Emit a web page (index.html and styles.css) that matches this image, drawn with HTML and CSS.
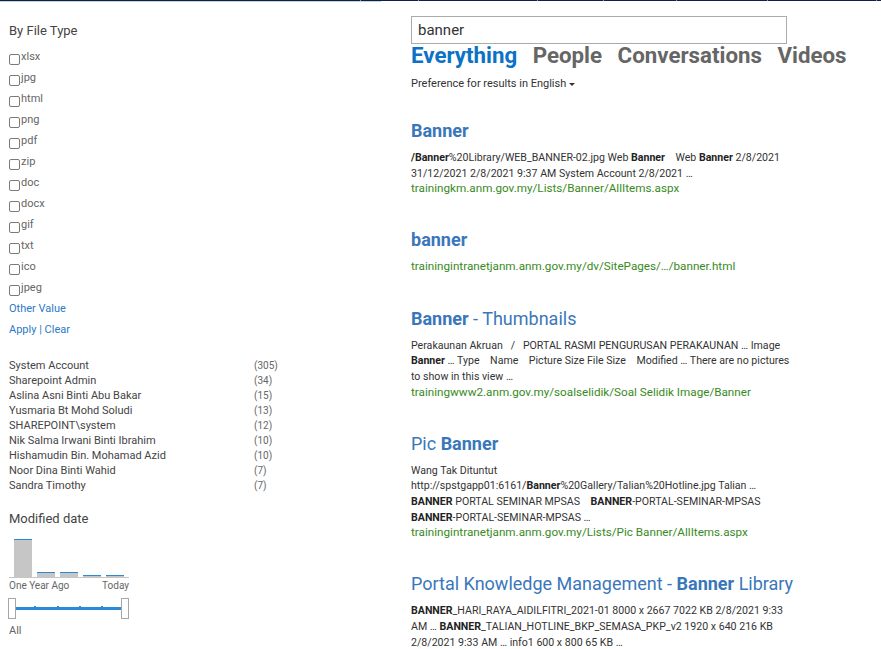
FILE: index.html
```html
<!DOCTYPE html>
<html>
<head>
<meta charset="utf-8">
<link rel="stylesheet" href="styles.css">
</head>
<body>
<div class="topline">
  <div class="navy">
    <span style="width:360px"></span><span style="width:57px"></span><span style="width:118px"></span><span style="width:65px"></span><span style="width:72px"></span><span style="width:90px"></span><span style="width:108px"></span><span class="last"></span>
  </div>
  <div class="lav"></div>
</div>
<div class="page">
  <aside class="refiners">
    <h3 class="ref-title">By File Type</h3>
    <ul class="types">
      <li><span class="cb"></span>xlsx</li>
      <li><span class="cb"></span>jpg</li>
      <li><span class="cb"></span>html</li>
      <li><span class="cb"></span>png</li>
      <li><span class="cb"></span>pdf</li>
      <li><span class="cb"></span>zip</li>
      <li><span class="cb"></span>doc</li>
      <li><span class="cb"></span>docx</li>
      <li><span class="cb"></span>gif</li>
      <li><span class="cb"></span>txt</li>
      <li><span class="cb"></span>ico</li>
      <li><span class="cb"></span>jpeg</li>
    </ul>
    <div class="link-row"><a>Other Value</a></div>
    <div class="link-row"><a>Apply</a> | <a>Clear</a></div>

    <ul class="authors">
      <li><span class="name">System Account</span><span class="count">(305)</span></li>
      <li><span class="name">Sharepoint Admin</span><span class="count">(34)</span></li>
      <li><span class="name">Aslina Asni Binti Abu Bakar</span><span class="count">(15)</span></li>
      <li><span class="name">Yusmaria Bt Mohd Soludi</span><span class="count">(13)</span></li>
      <li><span class="name">SHAREPOINT\system</span><span class="count">(12)</span></li>
      <li><span class="name">Nik Salma Irwani Binti Ibrahim</span><span class="count">(10)</span></li>
      <li><span class="name">Hishamudin Bin. Mohamad Azid</span><span class="count">(10)</span></li>
      <li><span class="name">Noor Dina Binti Wahid</span><span class="count">(7)</span></li>
      <li><span class="name">Sandra Timothy</span><span class="count">(7)</span></li>
    </ul>

    <h3 class="ref-title date-title">Modified date</h3>
    <div class="histo">
      <div class="bar" style="height:38px"></div>
      <div class="bar" style="height:5px"></div>
      <div class="bar" style="height:5px"></div>
      <div class="bar" style="height:2px"></div>
      <div class="bar" style="height:2px"></div>
    </div>
    <div class="histo-labels"><span>One Year Ago</span><span>Today</span></div>
    <div class="slider">
      <span class="handle"></span>
      <div class="track">
        <i style="left:18px"></i><i style="left:41px"></i><i style="left:63px"></i><i style="left:85px"></i>
      </div>
      <span class="handle"></span>
    </div>
    <div class="all">All</div>
  </aside>

  <main class="results">
    <div class="searchbox">banner</div>
    <nav class="tabs">
      <a class="active">Everything</a><a>People</a><a>Conversations</a><a>Videos</a>
    </nav>
    <div class="pref">Preference for results in English <span class="caret"></span></div>

    <div class="result">
      <h2 class="rtitle"><b>Banner</b></h2>
      <p class="snip"><b>/Banner</b>%20Library/WEB_BANNER-02.jpg Web <b>Banner</b> &nbsp;&nbsp; Web <b>Banner</b> 2/8/2021 31/12/2021 2/8/2021 9:37 AM System Account 2/8/2021 …</p>
      <div class="url">trainingkm.anm.gov.my/Lists/Banner/AllItems.aspx</div>
    </div>

    <div class="result">
      <h2 class="rtitle"><b>banner</b></h2>
      <div class="url">trainingintranetjanm.anm.gov.my/dv/SitePages/…/banner.html</div>
    </div>

    <div class="result">
      <h2 class="rtitle"><b>Banner</b> - Thumbnails</h2>
      <p class="snip">Perakaunan Akruan &nbsp; / &nbsp; PORTAL RASMI PENGURUSAN PERAKAUNAN … Image <b>Banner</b> … Type &nbsp;&nbsp; Name &nbsp;&nbsp; Picture Size File Size &nbsp;&nbsp; Modified … There are no pictures to show in this view …</p>
      <div class="url">trainingwww2.anm.gov.my/soalselidik/Soal Selidik Image/Banner</div>
    </div>

    <div class="result">
      <h2 class="rtitle">Pic <b>Banner</b></h2>
      <p class="snip">Wang Tak Dituntut<br>http://spstgapp01:6161/<b>Banner</b>%20Gallery/Talian%20Hotline.jpg Talian …<br><b>BANNER</b> PORTAL SEMINAR MPSAS &nbsp;&nbsp; <b>BANNER</b>-PORTAL-SEMINAR-MPSAS<br><b>BANNER</b>-PORTAL-SEMINAR-MPSAS …</p>
      <div class="url">trainingintranetjanm.anm.gov.my/Lists/Pic Banner/AllItems.aspx</div>
    </div>

    <div class="result">
      <h2 class="rtitle">Portal Knowledge Management - <b>Banner</b> Library</h2>
      <p class="snip"><b>BANNER</b>_HARI_RAYA_AIDILFITRI_2021-01 8000 x 2667 7022 KB 2/8/2021 9:33 AM … <b>BANNER</b>_TALIAN_HOTLINE_BKP_SEMASA_PKP_v2 1920 x 640 216 KB 2/8/2021 9:33 AM … info1 600 x 800 65 KB …</p>
    </div>
  </main>
</div>
</body>
</html>
```
FILE: styles.css
```css
* { box-sizing: border-box; }
html, body { margin: 0; padding: 0; background: #fff; }
body { font-family: Roboto, "Liberation Sans", Arial, sans-serif; color: #444; overflow: hidden; }

.topline { height: 2px; }
.navy { display: flex; gap: 1px; height: 1px; background: #8a95ab; }
.navy span { height: 1px; background: #0b2146; }
.navy span.last { flex: 1; }
.lav { width: 381px; height: 1px; background: #c9d0e0; }

.page { display: flex; }

.refiners { width: 411px; flex: none; padding: 20px 0 0 9px; }
.ref-title { margin: 0; font-size: 13px; font-weight: 400; line-height: 18px; color: #444; }
.types { list-style: none; margin: 6px 0 0; padding: 0; }
.types li { height: 21px; display: flex; align-items: center; font-size: 11px; color: #666; }
.cb { width: 11px; height: 11px; border: 1px solid #7a7a7a; border-radius: 2px; margin: 6px 1px 0 0; background: #fff; }
.link-row { height: 21px; line-height: 21px; font-size: 11px; color: #2a7ac8; }
.link-row a { color: #2a7ac8; }

.authors { list-style: none; margin: 18px 0 0; padding: 0; width: 280px; }
.authors li { display: flex; height: 15px; line-height: 15px; font-size: 11px; }
.authors .name { width: 245px; color: #444; }
.authors .count { font-size: 10px; color: #666; }

.date-title { margin-top: 17px; }
.histo { display: flex; align-items: flex-end; gap: 5px; width: 120px; height: 50px; padding-left: 5px; border-bottom: 1px solid #c6c6c6; }
.bar { width: 18px; background: #c6c6c6; border-top: 1px solid #2b8ad6; }
.histo-labels { display: flex; justify-content: space-between; width: 120px; font-size: 10px; line-height: 14px; color: #666; margin-top: 1px; }
.slider { display: flex; align-items: center; width: 121px; height: 21px; margin: 5px 0 0 -1px; }
.handle { width: 8px; height: 21px; border: 1px solid #a6a6a6; background: #fff; }
.track { position: relative; flex: 1; height: 3px; background: #2b8ad6; }
.track i { position: absolute; top: -1px; width: 2px; height: 2px; background: #2b8ad6; }
.all { font-size: 11px; color: #666; margin-top: 5px; line-height: 14px; }

.results { width: 470px; flex: none; padding-top: 14px; }
.searchbox { width: 376px; height: 28px; border: 1px solid #ababab; padding: 0 6px; font-size: 15px; line-height: 26px; color: #333; }
.tabs { display: flex; height: 24px; line-height: 24px; margin-top: -1px; }
.tabs a { font-size: 22.3px; font-weight: 700; color: #666; margin-right: 15.5px; }
.tabs a.active { color: #0b72c5; }
.pref { margin-top: 9px; font-size: 11px; line-height: 16px; color: #333; }
.caret { display: inline-block; width: 0; height: 0; border-left: 3px solid transparent; border-right: 3px solid transparent; border-top: 3px solid #333; vertical-align: middle; }

.result { width: 382px; margin-top: 27px; }
.result + .result { margin-top: 31.7px; }
.rtitle { margin: 0 0 7px; font-size: 18px; font-weight: 400; line-height: 24px; color: #3a77ba; white-space: nowrap; }
.rtitle b { font-weight: 700; }
.snip { margin: 0; font-size: 10.6px; line-height: 15.6px; color: #333; }
.snip b { color: #222; }
.url { font-size: 11.7px; line-height: 15.6px; color: #388a1e; }
```
